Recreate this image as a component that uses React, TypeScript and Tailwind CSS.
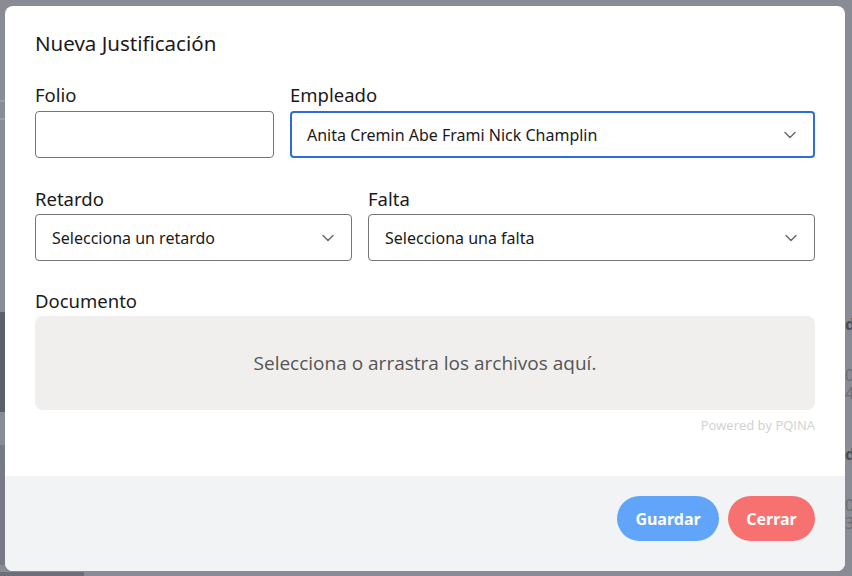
import React from "react";

const Chevron = () => (
  <svg width="14" height="14" viewBox="0 0 14 14" fill="none" className="shrink-0">
    <path d="M2 4.5 L7 9.5 L12 4.5" stroke="#6b6b6b" strokeWidth="1.5" strokeLinecap="round" strokeLinejoin="round" />
  </svg>
);

export default function App() {
  const font = { fontFamily: '"Noto Sans", "Open Sans", sans-serif' };
  return (
    <div className="relative w-[852px] h-[576px] overflow-hidden bg-[#898c95]" style={font}>
      {/* faint background page */}
      <div className="absolute left-0 top-[100px] w-[10px] h-[2px] bg-[#9a9ca3]" />
      <div className="absolute left-0 top-[118px] w-[10px] h-[2px] bg-[#9a9ca3]" />
      <div className="absolute left-0 top-[312px] w-[10px] h-[100px] bg-[#5d6069]" />
      <div className="absolute left-0 top-[445px] w-[10px] h-[120px] bg-[#777a84]" />
      <div className="absolute left-0 top-[572px] w-[84px] h-[4px] bg-[#6c6f78]" />
      <div className="absolute left-[845px] top-[316px] text-[#4b4e57] text-[16px] font-bold leading-none">d</div>
      <div className="absolute left-[845px] top-[366px] text-[#6b6e77] text-[16px] leading-[18px]">0</div>
      <div className="absolute left-[845px] top-[384px] text-[#6b6e77] text-[16px] leading-[18px]">4</div>
      <div className="absolute left-[845px] top-[446px] text-[#4b4e57] text-[16px] font-bold leading-none">d</div>
      <div className="absolute left-[845px] top-[496px] text-[#6b6e77] text-[16px] leading-[18px]">0</div>
      <div className="absolute left-[845px] top-[514px] text-[#6b6e77] text-[16px] leading-[18px]">3</div>

      <div className="absolute left-[5px] top-[6px] w-[840px] h-[565px] bg-white rounded-[8px] overflow-hidden flex flex-col">
        <div className="flex-1 px-[30px] pt-[23px]">
          <h2 className="text-[20.5px] leading-[28px] text-[#1a1a1a]">Nueva Justificación</h2>

          <div className="flex gap-[16px] mt-[38px]">
            <div className="w-[239px] flex flex-col">
              <label className="text-[18.5px] leading-[24px] text-[#1a1a1a] -mt-[12px] mb-[4px]">Folio</label>
              <div className="h-[47px] border border-[#757575] rounded-[4px]" />
            </div>
            <div className="flex-1 flex flex-col">
              <label className="text-[18.5px] leading-[24px] text-[#1a1a1a] -mt-[12px] mb-[4px]">Empleado</label>
              <div className="h-[47px] border-2 border-[#2d6be0] rounded-[4px] flex items-center justify-between pl-[15px] pr-[16px]">
                <span className="text-[16px] text-[#1a1a1a]">Anita Cremin Abe Frami Nick Champlin</span>
                <Chevron />
              </div>
            </div>
          </div>

          <div className="flex gap-[16px] mt-[29px]">
            <div className="w-[317px] flex flex-col">
              <label className="text-[18.5px] leading-[24px] text-[#1a1a1a] mb-[3px]">Retardo</label>
              <div className="h-[47px] border border-[#757575] rounded-[4px] flex items-center justify-between pl-[16px] pr-[16px]">
                <span className="text-[16px] text-[#1a1a1a]">Selecciona un retardo</span>
                <Chevron />
              </div>
            </div>
            <div className="flex-1 flex flex-col">
              <label className="text-[18.5px] leading-[24px] text-[#1a1a1a] mb-[3px]">Falta</label>
              <div className="h-[47px] border border-[#757575] rounded-[4px] flex items-center justify-between pl-[16px] pr-[16px]">
                <span className="text-[16px] text-[#1a1a1a]">Selecciona una falta</span>
                <Chevron />
              </div>
            </div>
          </div>

          <div className="mt-[28px] flex flex-col">
            <label className="text-[18.5px] leading-[24px] text-[#1a1a1a] mb-[3px]">Documento</label>
            <div
              className="h-[94px] bg-[#f0efed] rounded-[8px] flex items-center justify-center text-[19px] text-[#555555]"
              style={{ fontFamily: '"Open Sans", sans-serif' }}
            >
              Selecciona o arrastra los archivos aquí.
            </div>
            <div
              className="text-right text-[13px] leading-[16px] mt-[7px] text-[#d0d0d0]"
              style={{ fontFamily: '"Open Sans", sans-serif' }}
            >
              Powered by PQINA
            </div>
          </div>
        </div>

        <div className="h-[95px] bg-[#f1f3f4] flex items-start justify-end gap-[9px] px-[30px] pt-[20px]">
          <button className="h-[45px] w-[102px] rounded-full bg-[#60a5fa] text-white font-bold text-[16px]">Guardar</button>
          <button className="h-[45px] w-[87px] rounded-full bg-[#f87171] text-white font-bold text-[16px]">Cerrar</button>
        </div>
      </div>
    </div>
  );
}
